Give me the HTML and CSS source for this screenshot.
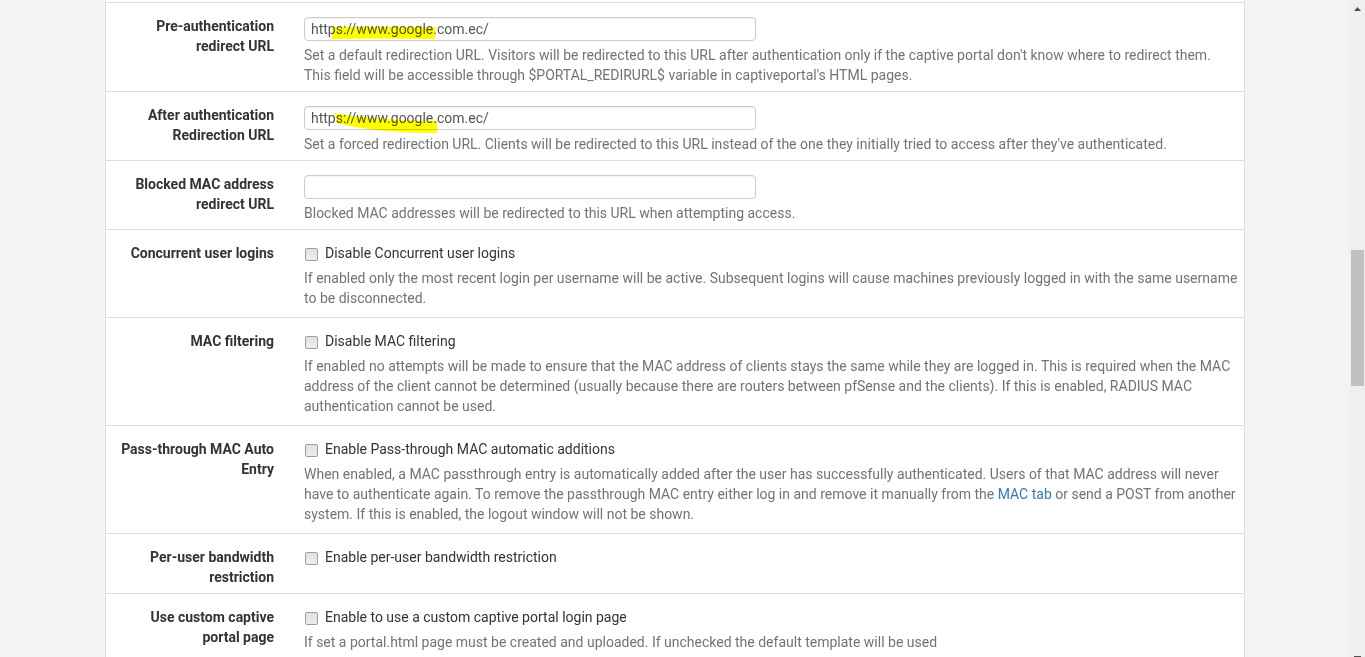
FILE: index.html
```html
<!DOCTYPE html>
<html lang="en">
<head>
<meta charset="utf-8">
<title>Captive Portal</title>
<link rel="stylesheet" href="styles.css">
</head>
<body>
<div class="window">
  <main class="page">
    <div class="panel">
      <div class="row">
        <div class="label">Pre-authentication<br>redirect URL</div>
        <div class="field">
          <div class="input-wrap">
            <input class="text-input" type="text" value="https://www.google.com.ec/" readonly>
            <svg class="marker" width="140" height="30" viewBox="0 0 140 30"><path d="M28 10 L131 10 L131 22 Q80 21 28 22 Z" fill="#ffff00"/></svg>
          </div>
          <p class="help">Set a default redirection URL. Visitors will be redirected to this URL after authentication only if the captive portal don't know where to redirect them.<br>This field will be accessible through $PORTAL_REDIRURL$ variable in captiveportal's HTML pages.</p>
        </div>
      </div>
      <div class="row">
        <div class="label">After authentication<br>Redirection URL</div>
        <div class="field">
          <div class="input-wrap">
            <input class="text-input" type="text" value="https://www.google.com.ec/" readonly>
            <svg class="marker" width="140" height="30" viewBox="0 0 140 30"><path d="M31 7 Q70 14 133 15 L133 27 Q70 27 33 17 Z" fill="#ffff00"/></svg>
          </div>
          <p class="help">Set a forced redirection URL. Clients will be redirected to this URL instead of the one they initially tried to access after they've authenticated.</p>
        </div>
      </div>
      <div class="row">
        <div class="label">Blocked MAC address<br>redirect URL</div>
        <div class="field">
          <div class="input-wrap">
            <input class="text-input" type="text" value="" readonly>
          </div>
          <p class="help">Blocked MAC addresses will be redirected to this URL when attempting access.</p>
        </div>
      </div>
      <div class="row">
        <div class="label">Concurrent user logins</div>
        <div class="field">
          <label class="check-line"><input class="check" type="checkbox">Disable Concurrent user logins</label>
          <p class="help help-check">If enabled only the most recent login per username will be active. Subsequent logins will cause machines previously logged in with the same username<br>to be disconnected.</p>
        </div>
      </div>
      <div class="row">
        <div class="label">MAC filtering</div>
        <div class="field">
          <label class="check-line"><input class="check" type="checkbox">Disable MAC filtering</label>
          <p class="help help-check">If enabled no attempts will be made to ensure that the MAC address of clients stays the same while they are logged in. This is required when the MAC<br>address of the client cannot be determined (usually because there are routers between pfSense and the clients). If this is enabled, RADIUS MAC<br>authentication cannot be used.</p>
        </div>
      </div>
      <div class="row">
        <div class="label">Pass-through MAC Auto<br>Entry</div>
        <div class="field">
          <label class="check-line"><input class="check" type="checkbox">Enable Pass-through MAC automatic additions</label>
          <p class="help help-check">When enabled, a MAC passthrough entry is automatically added after the user has successfully authenticated. Users of that MAC address will never<br>have to authenticate again. To remove the passthrough MAC entry either log in and remove it manually from the <a class="link" href="#">MAC tab</a> or send a POST from another<br>system. If this is enabled, the logout window will not be shown.</p>
        </div>
      </div>
      <div class="row">
        <div class="label">Per-user bandwidth<br>restriction</div>
        <div class="field">
          <label class="check-line"><input class="check" type="checkbox">Enable per-user bandwidth restriction</label>
        </div>
      </div>
      <div class="row">
        <div class="label">Use custom captive<br>portal page</div>
        <div class="field">
          <label class="check-line"><input class="check" type="checkbox">Enable to use a custom captive portal login page</label>
          <p class="help help-check">If set a portal.html page must be created and uploaded. If unchecked the default template will be used</p>
        </div>
      </div>
    </div>
  </main>
  <div class="scrollbar">
    <div class="arrow-up"><svg width="7" height="4" viewBox="0 0 7 4"><polygon points="3.5,0 7,4 0,4" fill="#505050"/></svg></div>
    <div class="thumb"></div>
    <div class="track-fill"></div>
    <div class="arrow-down"></div>
  </div>
</div>
</body>
</html>
```

FILE: styles.css
```css
html, body {
  margin: 0;
  padding: 0;
  height: 657px;
  overflow: hidden;
}

body {
  background: #f3f3f3;
  font-family: "Roboto", "Liberation Sans", sans-serif;
  font-size: 14px;
  line-height: 20px;
  color: #333;
}

.window {
  display: flex;
  height: 657px;
}

.page {
  flex: 1;
  overflow: hidden;
  padding-left: 105px;
}

.panel {
  width: 1138px;
  background: #fff;
  border-left: 1px solid #ddd;
  border-right: 1px solid #ddd;
  padding-top: 2px;
  min-height: 700px;
}

.row {
  display: grid;
  grid-template-columns: 183px 1fr;
  border-top: 1px solid #ddd;
  padding: 14px 0 5px;
}

.label {
  text-align: right;
  padding-right: 15px;
  margin: -1px 0 1px;
  font-weight: 700;
  color: #333;
}

.field {
  padding-left: 15px;
  min-width: 0;
}

.input-wrap {
  position: relative;
  width: 452px;
  height: 24px;
}

.text-input {
  display: block;
  box-sizing: border-box;
  width: 452px;
  height: 24px;
  margin: 0;
  padding: 0 6px;
  border: 1px solid #ccc;
  border-radius: 4px;
  font: inherit;
  font-size: 14px;
  color: #555;
  background: #fff;
  box-shadow: inset 0 1px 1px rgba(0, 0, 0, 0.05);
  outline: none;
}

.marker {
  position: absolute;
  left: 0;
  top: 0;
  mix-blend-mode: multiply;
  pointer-events: none;
}

.help {
  margin: 4px 0 1px;
  color: #737373;
  white-space: nowrap;
}

.help-check {
  margin-top: 5px;
  margin-bottom: 4px;
}

.link {
  color: #337ab7;
  text-decoration: none;
}

.check-line {
  display: flex;
  align-items: center;
  height: 20px;
  margin-top: -1px;
  color: #333;
}

.check {
  appearance: none;
  -webkit-appearance: none;
  box-sizing: border-box;
  width: 13px;
  height: 13px;
  margin: 2px 7px 0 1px;
  border: 1px solid #9d9d9d;
  border-radius: 2px;
  background: linear-gradient(#e2e2e2, #ececec);
  flex: none;
}

.scrollbar {
  width: 16px;
  background: #efefef;
  display: flex;
  flex-direction: column;
}

.arrow-up {
  height: 17px;
  display: flex;
  justify-content: center;
  padding-top: 7px;
  box-sizing: border-box;
}

.arrow-up svg {
  display: block;
  margin-left: 1px;
}

.thumb {
  margin: 233px 1px 0 2px;
  height: 136px;
  background: #c1c1c1;
}

.track-fill {
  flex: 1;
}

.arrow-down {
  height: 1px;
  width: 7px;
  margin-left: 5px;
  background: #505050;
}
```
